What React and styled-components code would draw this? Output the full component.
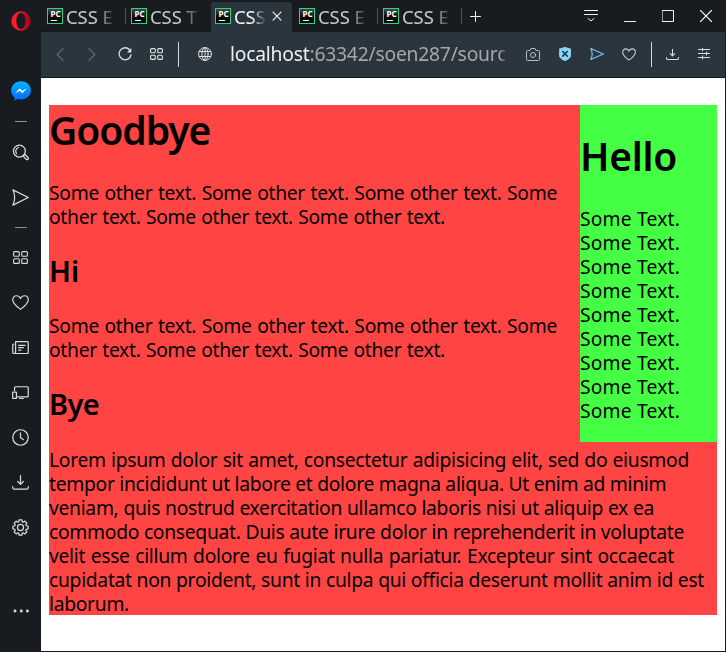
import React from "react";
import styled, { createGlobalStyle } from "styled-components";

const Global = createGlobalStyle`
  * { box-sizing: border-box; }
  body { margin: 0; background: #181c20; font-family: "Noto Sans", sans-serif; overflow: hidden; }
`;

const Browser = styled.div`
  display: grid;
  grid-template-columns: 41px 1fr;
  width: 726px;
  height: 652px;
  background: #181c20;
`;

const Sidebar = styled.nav`
  display: grid;
  grid-template-rows: 42px 28px 42px 18px 44px 46px 14px 46px 45px 45px 45px 45px 45px 45px 41px 40px 21px;
  color: #d3dee2;
`;

const Slot = styled.div`
  display: flex;
  align-items: center;
  justify-content: center;
`;

const SideSlot = styled(Slot)`
  svg {
    width: 17px;
    height: auto;
  }
`;

const Dash = styled.i`
  width: 12px;
  height: 1px;
  margin-left: 1px;
  background: #84949b;
`;

const Svg = styled.svg`
  display: block;
  flex: none;
  fill: none;
  stroke: currentColor;
  stroke-width: ${(p) => p.$stroke || 1.3};
  stroke-linecap: round;
  stroke-linejoin: round;
`;

const Main = styled.div`
  display: grid;
  grid-template-rows: 32px 46px 573px 1px;
  min-width: 0;
`;

const TitleBar = styled.header`
  display: grid;
  grid-template-columns: repeat(5, 84px) 27px 1fr 40px 38px 38px 38px 1px;
  padding-left: 1px;
  background: linear-gradient(#181c1f 31px, #12171a 31px);
  color: #eef1f2;
`;

const TabBox = styled.div`
  display: flex;
  align-items: flex-start;
  height: 30px;
  margin: 2px 2px 0 1px;
  padding: 6px 0 0 4px;
  border-radius: 3px 3px 0 0;
  background: ${(p) => (p.$active ? "#2b353d" : "transparent")};
`;

const TabCell = styled.div`
  height: 32px;
  background: ${(p) =>
    p.$divider ? "linear-gradient(#4a4f52, #4a4f52) right 8px / 1px 16px no-repeat" : "none"};
`;

const TabTitle = styled.span`
  width: ${(p) => (p.$active ? 33 : 52)}px;
  margin: ${(p) => (p.$active ? "-4px 5px 0 3px" : "-4px 0 0 3px")};
  overflow: hidden;
  white-space: nowrap;
  font-size: 18.5px;
  line-height: 25px;
  letter-spacing: -0.1px;
  color: ${(p) => (p.$active ? "#f4f6f7" : "#c6cacb")};
  mask-image: linear-gradient(90deg, #000 ${(p) => (p.$active ? "55%" : "60%")}, transparent 98%);
`;

const Favicon = styled.span`
  flex: none;
  width: 16px;
  height: 16px;
  padding: 1px 0 0 1px;
  border: 1px solid #21d789;
  background: linear-gradient(180deg, #454745, #050505 65%);
  color: #fff;
  font: 700 8px/8px "Noto Sans", sans-serif;
  text-align: center;
  letter-spacing: 0;

  &::after {
    content: "";
    display: block;
    width: 6px;
    height: 1px;
    margin: 2px 0 0 2px;
    background: #fff;
  }
`;

const Toolbar = styled.div`
  display: grid;
  grid-template-columns: 32px 32px 33px 31px 13px 40px 292px 32px 32px 32px 32px 12px 30px 34px;
  padding-left: 3px;
  background: #2b353d;
  border-bottom: 1px solid #11171b;
  margin-right: 1px;
  color: #dbe3e6;
`;

const ToolSlot = styled(Slot)`
  padding-bottom: 1px;
  color: ${(p) => p.$color || "inherit"};
`;

const Rule = styled.i`
  width: 1px;
  height: 25px;
  background: #cfd5d8;
`;

const Address = styled.div`
  margin: 0 12px 0 5px;
  overflow: hidden;
  white-space: nowrap;
  font-size: 19.3px;
  line-height: 44px;
  letter-spacing: -0.22px;
  color: #a5a8ab;
  mask-image: linear-gradient(90deg, #000 98%, transparent 101%);

  b { color: #edf0f2; font-weight: 400; }
`;

const Page = styled.main`
  padding: 27px 8px 0;
  margin-right: 1px;
  background: #fff;
  color: #000;
`;

const Article = styled.article`
  height: 510px;
  background: #f44;
`;

const Aside = styled.aside`
  float: right;
  width: 137px;
  height: 337px;
  padding-top: 27px;
  background: #4f4;
`;

const H1 = styled.h1`
  margin: 0 0 27px;
  font-size: 39px;
  font-weight: 600;
  line-height: ${(p) => p.$h || 49}px;
  height: ${(p) => p.$h || 49}px;
  letter-spacing: ${(p) => p.$track || 0}px;
`;

const H2 = styled.h2`
  margin: 25px 0;
  font-size: 29px;
  font-weight: 600;
  height: 35px;
  line-height: 33px;
  letter-spacing: ${(p) => p.$track || 0}px;
`;

const P = styled.p`
  margin: 0;
  padding-top: ${(p) => p.$drop || 0}px;
`;

const Line = styled.span`
  display: block;
  width: ${(p) => p.$w}px;
  height: 24px;
  font-size: 19.3px;
  line-height: 24px;
  letter-spacing: ${(p) => (p.$track === undefined ? -0.3 : p.$track)}px;
  white-space: nowrap;
  text-align: justify;
  text-align-last: justify;
`;

const Icon = ({ w = 20, h = w, s, children }) => (
  <Svg width={w} height={h} viewBox={`0 0 ${w} ${h}`} $stroke={s}>{children}</Svg>
);

const Grid = ({ w = 17, h = 15 }) => {
  const a = (w - 3) / 2 - 0.3;
  const b = (h - 3) / 2 - 0.3;
  return (
    <Icon w={w} h={h} s={1.1}>
      {[[0.6, 0.6], [w - a - 0.6, 0.6], [0.6, h - b - 0.6], [w - a - 0.6, h - b - 0.6]].map(([x, y]) => (
        <rect key={`${x}-${y}`} x={x} y={y} width={a} height={b} rx="1" />
      ))}
    </Icon>
  );
};

const Heart = ({ w = 18, h = 16, s = 1.3 }) => (
  <Svg width={w} height={h} viewBox="0 0 18 16" $stroke={s}>
    <path d="M9 15.2C5.8 12.8.8 9.2.8 5 .8 2.5 2.6.8 4.8.8 6.7.8 8.2 1.9 9 3.6 9.8 1.9 11.3.8 13.2.8c2.2 0 4 1.7 4 4.2 0 4.2-5 7.8-8.2 10.2Z" />
  </Svg>
);

const Download = ({ w = 18, h = 16, s = 1.3 }) => (
  <Svg width={w} height={h} viewBox="0 0 18 16" $stroke={s}>
    <path d="M9 .7v9M6 6.9l3 3 3-3M.8 12.2v1.3c0 .9.6 1.5 1.5 1.5h13.4c.9 0 1.5-.6 1.5-1.5v-1.3" />
  </Svg>
);

const Send = ({ w = 18, h = 18, s = 1.3 }) => (
  <Svg width={w} height={h} viewBox="0 0 18 18" preserveAspectRatio="none" $stroke={s}>
    <path d="M1 .9 17.2 9 1 17.1C3.5 11.5 3.5 6.5 1 .9Z" />
  </Svg>
);

const GEAR = Array.from({ length: 8 }, (_, i) => {
  const pt = (r, d) => {
    const t = ((i * 45 + d) * Math.PI) / 180;
    return `${(9 + r * Math.cos(t)).toFixed(2)} ${(9 + r * Math.sin(t)).toFixed(2)}`;
  };
  return `${i ? "L" : "M"}${pt(8.2, -11)} L${pt(8.2, 11)} L${pt(6.3, 17)} L${pt(6.3, 28)}`;
}).join(" ") + "Z";

const Tab = ({ title, active, divider }) => (
  <TabCell $divider={divider}>
    <TabBox $active={active}>
      <Favicon>PC</Favicon>
      <TabTitle $active={active}>{title}</TabTitle>
      {active && (
        <Icon w={10} h={16} s={1.2}><path d="M1 4.2l8 8M9 4.2l-8 8" /></Icon>
      )}
    </TabBox>
  </TabCell>
);

const OTHER = [
  ["Some other text. Some other text. Some other text. Some", 508],
  ["other text. Some other text. Some other text.", 396],
];

const LOREM = [
  ["Lorem ipsum dolor sit amet, consectetur adipisicing elit, sed do eiusmod", 640],
  ["tempor incididunt ut labore et dolore magna aliqua. Ut enim ad minim", 617],
  ["veniam, quis nostrud exercitation ullamco laboris nisi ut aliquip ex ea", 605],
  ["commodo consequat. Duis aute irure dolor in reprehenderit in voluptate", 635],
  ["velit esse cillum dolore eu fugiat nulla pariatur. Excepteur sint occaecat", 625],
  ["cupidatat non proident, sunt in culpa qui officia deserunt mollit anim id est", 655],
  ["laborum.", 80],
];

const Lines = ({ rows, drop }) => (
  <P $drop={drop}>{rows.map(([t, w], i) => <Line key={i} $w={w}>{t}</Line>)}</P>
);

export default function App() {
  return (
    <>
      <Global />
      <Browser>
        <Sidebar>
          <Slot>
            <Svg width="20" height="20" viewBox="0 0 20 20">
              <defs>
                <linearGradient id="ring" x1="0" x2="1">
                  <stop offset="0.3" stopColor="#ff1b2d" />
                  <stop offset="1" stopColor="#a70014" />
                </linearGradient>
              </defs>
              <path fill="url(#ring)" stroke="none" fillRule="evenodd" d="M10 .3a9.7 9.7 0 1 0 0 19.4A9.7 9.7 0 1 0 10 .3Zm0 1.7c2.8 0 4.6 3.5 4.6 8s-1.8 8-4.6 8-4.6-3.5-4.6-8S7.2 2 10 2Z" />
            </Svg>
          </Slot>
          <Slot />
          <Slot>
            <Svg width="20" height="20" viewBox="0 0 20 20">
              <defs>
                <linearGradient id="chat" x1="0" x2="0" y1="0" y2="1">
                  <stop stopColor="#00b5ff" />
                  <stop offset="1" stopColor="#0068ff" />
                </linearGradient>
              </defs>
              <path fill="url(#chat)" stroke="none" d="M10 .2C4.4.2.1 4.2.1 9.6c0 2.9 1.3 5.3 3.4 7v3.2l3.1-1.7c1 .3 2.2.4 3.4.4 5.6 0 9.9-3.9 9.9-9.2S15.6.2 10 .2Z" />
              <path fill="#fff" stroke="none" d="m4.2 12.2 4.500-4.900 2.600 2.500 4.700-2.500-4.600 4.900-2.500-2.500Z" />
            </Svg>
          </Slot>
          <Slot><Dash /></Slot>
          <SideSlot>
            <Icon w={18}>
              <circle cx="7.8" cy="7.5" r="6.3" />
              <path d="M4.8 10.1A4.1 4.1 0 0 1 7 3.7M12.2 12.3l1.500-1.200 3.300 3.200c.7.7.4 1.300-.1 1.800s-1.300.6-1.900 0L12 13.100" />
            </Icon>
          </SideSlot>
          <SideSlot><Send /></SideSlot>
          <Slot><Dash /></Slot>
          <Slot><Grid w={15} h={13} /></Slot>
          <SideSlot><Heart /></SideSlot>
          <SideSlot>
            <Icon w={18} h={14}>
              <path d="M3.8.7h12.400c.6 0 1 .4 1 1v10.600c0 .6-.4 1-1 1H2.300c-.9 0-1.500-.7-1.500-1.500V4.500c0-.7.5-1.100 1-1.100M3.800.7v10.600c0 1-.5 2-1.500 2M7 4.600h6.800M7 7.100h5M7 9.600h2.500" />
            </Icon>
          </SideSlot>
          <SideSlot>
            <Icon w={18} h={14}>
              <path d="M2.7 4.700V1.800c0-.6.4-1 1-1h12.500c.6 0 1 .4 1 1v8.700c0 .6-.4 1-1 1H6M8 13.300h4" />
              <rect x=".7" y="6.500" width="4" height="6.700" rx=".5" />
            </Icon>
          </SideSlot>
          <SideSlot>
            <Icon w={18}><circle cx="9" cy="9" r="8.2" /><path d="M9 4v5.200l3 2" /></Icon>
          </SideSlot>
          <SideSlot><Download /></SideSlot>
          <SideSlot>
            <Icon w={18}><path d={GEAR} /><circle cx="9" cy="9" r="3.2" /></Icon>
          </SideSlot>
          <Slot />
          <Slot>
            <Icon w={16} h={4} s={0.1}>
              <g fill="currentColor"><circle cx="2" cy="2" r="1.4" /><circle cx="8.3" cy="2" r="1.4" /><circle cx="14.4" cy="2" r="1.4" /></g>
            </Icon>
          </Slot>
        </Sidebar>

        <Main>
          <TitleBar>
            <Tab title="CSS E" divider />
            <Tab title="CSS T" />
            <Tab title="CSS" active />
            <Tab title="CSS E" divider />
            <Tab title="CSS E" divider />
            <Slot><Icon w={11} s={1}><path d="M5.5.5v10M.5 5.500h10" /></Icon></Slot>
            <span />
            <Slot><Icon w={14} h={12} s={1}><path d="M.5.5h13M.5 4.500h13M4 8.500l3 2.500 3-2.500" /></Icon></Slot>
            <Slot><Icon w={12} s={1}><path d="M.5 11.500h11" /></Icon></Slot>
            <Slot><Icon w={12} s={1}><path d="M.5.5h11v11h-11z" /></Icon></Slot>
            <Slot><Icon w={12} s={1.1}><path d="M.5.5l11 11M11.5.5l-11 11" /></Icon></Slot>
          </TitleBar>

          <Toolbar>
            <ToolSlot $color="#5f6a71"><Icon w={8} h={13} s={1.2}><path d="M7 .7 1.2 6.500 7 12.300" /></Icon></ToolSlot>
            <ToolSlot $color="#5f6a71"><Icon w={8} h={13} s={1.2}><path d="m1 .7 5.800 5.800L1 12.300" /></Icon></ToolSlot>
            <ToolSlot>
              <Icon w={14} s={1.3}><path d="M11.8 3A6 6 0 1 0 13 8" /><path fill="currentColor" stroke="none" d="M9 5.400h4.300V1Z" /></Icon>
            </ToolSlot>
            <ToolSlot><Grid w={13} h={12} /></ToolSlot>
            <ToolSlot><Rule /></ToolSlot>
            <ToolSlot>
              <Icon w={14} s={1}><circle cx="7" cy="7" r="6.4" /><ellipse cx="7" cy="7" rx="3.1" ry="6.4" /><path d="M1.3 4.500h11.400M1.300 9.500h11.400M7 .6v12.800" /></Icon>
            </ToolSlot>
            <Address><b>localhost</b>:63342/soen287/sourc</Address>
            <ToolSlot $color="#b6bec2">
              <Icon w={14} h={13} s={1}><path d="M.5 3.500c0-.5.4-1 1-1H4L5 .5h4l1 2h2.500c.6 0 1 .5 1 1v8c0 .6-.4 1-1 1h-11c-.6 0-1-.4-1-1Z" /><circle cx="7" cy="7" r="2.5" /></Icon>
            </ToolSlot>
            <ToolSlot $color="#8bd3ff">
              <Icon w={12} h={14} s={1}><path fill="currentColor" d="M.5 2 6 .5 11.500 2v6.500c0 2.500-3 4.300-5.500 5C3.500 12.800.5 11 .5 8.500Z" /><path stroke="#25323c" strokeWidth="1.5" d="m3.700 4.500 4.600 4.600m0-4.600L3.700 9.100" /></Icon>
            </ToolSlot>
            <ToolSlot $color="#78bfe8"><Send w={14} h={12} s={1.6} /></ToolSlot>
            <ToolSlot $color="#c5ced2"><Heart w={14} h={13} s={1.4} /></ToolSlot>
            <ToolSlot><Rule /></ToolSlot>
            <ToolSlot><Download w={13} h={13} s={1.5} /></ToolSlot>
            <ToolSlot>
              <Icon w={12} h={12} s={1}><path d="M.5 1.500h11M.5 5.500h11M.5 9.500h11M4.500 0v3M8.500 4v3M4.500 8v3" /></Icon>
            </ToolSlot>
          </Toolbar>

          <Page>
            <Article>
              <Aside>
                <H1 $h={48} $track={-0.3}>Hello</H1>
                <P>{Array.from({ length: 9 }, (_, i) => <Line key={i} $w={100} $track={0.15}>Some Text.</Line>)}</P>
              </Aside>
              <H1 $track={-1.05}>Goodbye</H1>
              <Lines rows={OTHER} />
              <H2>Hi</H2>
              <Lines rows={OTHER} />
              <H2 $track={-0.6}>Bye</H2>
              <Lines rows={LOREM} drop={1} />
            </Article>
          </Page>
        </Main>
      </Browser>
    </>
  );
}
